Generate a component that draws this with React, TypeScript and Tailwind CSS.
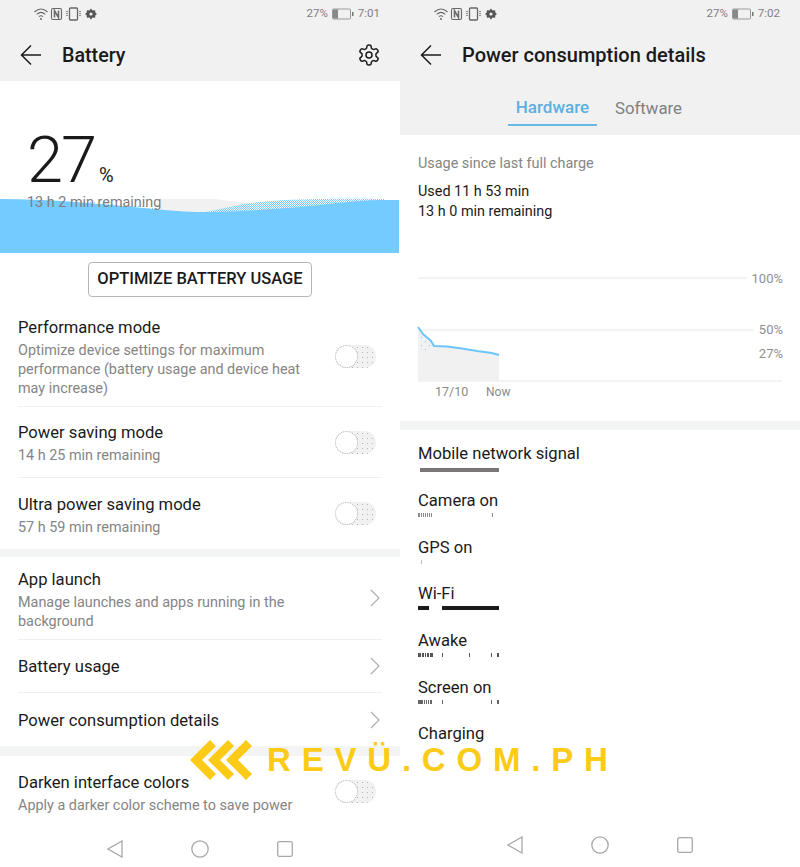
const font = { fontFamily: "Roboto, 'Liberation Sans', sans-serif" };

function StatusBar({ time }: { time: string }) {
  return (
    <div className="h-[28px] flex items-center justify-between pl-[34px] pr-[20px] text-[#7f7f7f]">
      <svg width="64" height="14" viewBox="0 0 64 14" fill="none" stroke="#666" strokeWidth="1.1">
        <path d="M0.5 5 Q7 -1 13.5 5" />
        <path d="M2.8 7.4 Q7 3.4 11.2 7.4" />
        <path d="M5 9.6 Q7 7.8 9 9.6" />
        <circle cx="7" cy="12" r="1" fill="#666" stroke="none" />
        <rect x="17.5" y="1.5" width="10" height="11" rx="1.5" />
        <path d="M20.5 10.5V3.8L24.5 10.5V3.5" strokeWidth="1.5" />
        <rect x="35.5" y="1" width="8" height="12" rx="1" strokeWidth="1.3" />
        <path d="M33 4v6M46 4v6" strokeDasharray="1 1" strokeWidth="1.4" />
        <path d="M57 1.6l1.6 1.9 2.5-.2.3 2.5 1.6 1.2-1.6 1.2-.3 2.5-2.5-.2L57 12.400l-1.600-1.900-2.500.2-.3-2.500L51 7l1.600-1.200.3-2.500 2.500.2z" fill="#555" stroke="none" />
        <circle cx="57" cy="7" r="1.600" fill="#f1f1f1" stroke="none" />
      </svg>
      <div className="flex items-center gap-[4px] text-[11.500px] leading-none">
        <span>27%</span>
        <svg width="22" height="12" viewBox="0 0 22 12" fill="none">
          <rect x="0.500" y="1" width="18" height="10" rx="1" stroke="#999" />
          <rect x="1" y="1.500" width="5" height="9" fill="#888" />
          <rect x="20" y="4" width="1.500" height="4" fill="#777" />
        </svg>
        <span>{time}</span>
      </div>
    </div>
  );
}

function BackArrow() {
  return (
    <svg width="22" height="22" viewBox="0 0 22 22" fill="none" stroke="#1c1c1c" strokeWidth="1.500" className="shrink-0">
      <path d="M21 11H2M11 1.500 1.500 11 11 20.500" />
    </svg>
  );
}

function Gear() {
  return (
    <svg width="24" height="24" viewBox="0 0 24 24" fill="none" stroke="#1c1c1c" strokeWidth="1.500" strokeLinejoin="round" className="ml-auto shrink-0">
      <path d="M12.22 2h-.44a2 2 0 0 0-2 2v.18a2 2 0 0 1-1 1.73l-.43.25a2 2 0 0 1-2 0l-.15-.08a2 2 0 0 0-2.73.73l-.22.38a2 2 0 0 0 .73 2.73l.15.1a2 2 0 0 1 1 1.72v.51a2 2 0 0 1-1 1.740l-.15.09a2 2 0 0 0-.73 2.730l.22.38a2 2 0 0 0 2.730.730l.15-.08a2 2 0 0 1 2 0l.43.25a2 2 0 0 1 1 1.730V20a2 2 0 0 0 2 2h.44a2 2 0 0 0 2-2v-.18a2 2 0 0 1 1-1.730l.43-.25a2 2 0 0 1 2 0l.15.08a2 2 0 0 0 2.730-.730l.22-.39a2 2 0 0 0-.730-2.730l-.15-.08a2 2 0 0 1-1-1.740v-.5a2 2 0 0 1 1-1.740l.15-.09a2 2 0 0 0 .730-2.730l-.22-.38a2 2 0 0 0-2.730-.730l-.15.08a2 2 0 0 1-2 0l-.43-.25a2 2 0 0 1-1-1.730V4a2 2 0 0 0-2-2z" />
      <circle cx="12" cy="12" r="3" />
    </svg>
  );
}

function Toggle() {
  return (
    <div className="relative w-[41px] h-[23px] rounded-full shrink-0 bg-[#f1f1f1] bg-[radial-gradient(#b5b5b5_0.8px,transparent_1px)] bg-[length:5px_5px]">
      <div className="absolute left-0 top-0 w-[23px] h-[23px] rounded-full bg-white border-[1.500px] border-dotted border-[#b0b0b0]" />
    </div>
  );
}

function Chevron() {
  return (
    <svg width="10" height="18" viewBox="0 0 10 18" fill="none" stroke="#ababab" strokeWidth="1.100" className="mr-[2px] shrink-0">
      <path d="M1 1l8 8-8 8" />
    </svg>
  );
}

function Row({
  title,
  lines = [],
  right,
  h,
  divider = true,
}: {
  title: string;
  lines?: string[];
  right?: "toggle" | "chevron";
  h: string;
  divider?: boolean;
}) {
  return (
    <div className={`mx-[18px] w-[364px] flex items-center justify-between ${h} ${divider ? "border-b border-[#efefef]" : ""}`}>
      <div className="w-[310px] pt-[2px]">
        <div className="text-[16.600px] leading-[24px] text-[#1a1a1a]">{title}</div>
        {lines.length > 0 && (
          <div className="mt-[1px]">
            {lines.map((l) => (
              <div key={l} className="text-[14.400px] leading-[19px] text-[#858585]">
                {l}
              </div>
            ))}
          </div>
        )}
      </div>
      {right === "toggle" && (
        <div className="pr-[6px]">
          <Toggle />
        </div>
      )}
      {right === "chevron" && <Chevron />}
    </div>
  );
}

function Band({ h }: { h: string }) {
  return <div className={`${h} bg-[#f3f4f4]`} />;
}

function NavBar() {
  return (
    <div className="mt-auto h-[44px] shrink-0 flex items-center justify-center gap-[68px]">
      <svg width="16" height="18" viewBox="0 0 16 18" fill="none" stroke="#a8a8a8" strokeWidth="1.300">
        <path d="M15 1v16L1 9z" />
      </svg>
      <svg width="18" height="18" viewBox="0 0 18 18" fill="none" stroke="#a8a8a8" strokeWidth="1.300">
        <circle cx="9" cy="9" r="8.200" />
      </svg>
      <svg width="16" height="16" viewBox="0 0 16 16" fill="none" stroke="#a8a8a8" strokeWidth="1.300">
        <rect x="0.700" y="0.700" width="14.600" height="14.600" rx="1.500" />
      </svg>
    </div>
  );
}

function Wave() {
  return (
    <svg className="absolute left-0 top-[115px]" width="400" height="57" viewBox="0 0 400 57">
      <defs>
        <pattern id="dots" width="2" height="2" patternUnits="userSpaceOnUse">
          <rect width="1" height="1" fill="#74cbff" />
          <rect x="1" y="1" width="1" height="1" fill="#74cbff" />
        </pattern>
        <pattern id="dots2" width="4" height="4" patternUnits="userSpaceOnUse">
          <rect width="1" height="1" fill="#74cbff" />
          <rect x="2" y="2" width="1" height="1" fill="#74cbff" />
        </pattern>
      </defs>
      <path d="M160 3 L215 3 C225 4 238 6 250 7 L250 18 L160 18 Z" fill="#f1f1f1" />
      <path d="M205 16 C225 12 240 8 260 6 C280 4 300 3 325 3 C350 2.500 370 3 385 3 L385 14 L205 18 Z" fill="url(#dots)" />
      <path d="M90 6 C110 7 130 9 160 12 L160 15 L90 10 Z" fill="url(#dots2)" />
      <path d="M0 3 C50 3 90 7 130 10.700 C160 13.700 185 16 205 16 C230 16 262 14 300 11 C330 8 360 4 380 4 L399 4 L399 57 L0 57 Z" fill="#74cbff" />
    </svg>
  );
}

type Seg = [number, number];

function Bars({ segs, color, y = 1 }: { segs: Seg[]; color: string; y?: number }) {
  return (
    <svg width="84" height="6" viewBox="0 0 84 6" className="block">
      {segs.map(([x, w]) => (
        <rect key={x} x={x} y={y} width={w} height="4" fill={color} />
      ))}
    </svg>
  );
}

function Metric({ title, segs, color }: { title: string; segs: Seg[]; color: string }) {
  return (
    <div className="h-[46.670px]">
      <div className="text-[16.600px] leading-[24px] text-[#1a1a1a]">{title}</div>
      <div className="mt-[-1px]">
        <Bars segs={segs} color={color} />
      </div>
    </div>
  );
}

function ChartRow({ label, line = true, dy = "" }: { label: string; line?: boolean; dy?: string }) {
  return (
    <div className="h-[16px] flex items-center justify-end gap-[5px]">
      {line && <div className="flex-1 h-[2px] bg-[#f4f4f4]" />}
      <span className={`text-[13px] leading-[16px] text-[#8f8f8f] mr-[-1px] ${dy}`}>{label}</span>
    </div>
  );
}

function Left() {
  return (
    <div className="w-[400px] h-[867px] flex flex-col bg-white overflow-hidden">
      <div className="h-[81px] bg-[#f1f1f1] shrink-0">
        <StatusBar time="7:01" />
        <div className="flex items-center h-[53px] pl-[20px] pr-[19px]">
          <BackArrow />
          <span className="ml-[20px] mt-[2px] text-[19.700px] font-medium text-[#1a1a1a] leading-none">Battery</span>
          <Gear />
        </div>
      </div>

      <div className="relative h-[172px] shrink-0 pl-[27px]">
        <Wave />
        <div className="relative pt-[42px] flex items-baseline">
          <span className="text-[65px] leading-[74px] font-light text-[#1a1a1a] tracking-[-2px]">27</span>
          <span className="ml-[4px] text-[20px] leading-none text-[#1a1a1a]">%</span>
        </div>
        <div className="relative mt-[-4px] text-[14.400px] leading-[20px] text-[#7d7d7d]">13 h 2 min remaining</div>
      </div>

      <div className="mt-[9px] shrink-0 self-center w-[224px] h-[35px] rounded-[4px] border border-[#b5b5b5] flex items-center justify-center text-[16.500px] font-medium text-[#1a1a1a]">
        OPTIMIZE BATTERY USAGE
      </div>

      <div className="mt-[9px] shrink-0">
        <Row
          h="h-[101px]"
          title="Performance mode"
          lines={["Optimize device settings for maximum", "performance (battery usage and device heat", "may increase)"]}
          right="toggle"
        />
        <Row h="h-[71px]" title="Power saving mode" lines={["14 h 25 min remaining"]} right="toggle" />
        <Row h="h-[71px]" title="Ultra power saving mode" lines={["57 h 59 min remaining"]} right="toggle" divider={false} />
        <Band h="h-[8px]" />
        <Row
          h="h-[83px]"
          title="App launch"
          lines={["Manage launches and apps running in the", "background"]}
          right="chevron"
        />
        <Row h="h-[53px]" title="Battery usage" right="chevron" />
        <Row h="h-[53px]" title="Power consumption details" right="chevron" divider={false} />
        <Band h="h-[10px]" />
        <Row
          h="h-[71px]"
          title="Darken interface colors"
          lines={["Apply a darker color scheme to save power"]}
          right="toggle"
          divider={false}
        />
      </div>
      <NavBar />
    </div>
  );
}

function Right() {
  return (
    <div className="w-[400px] h-[867px] flex flex-col bg-white overflow-hidden">
      <div className="h-[135px] bg-[#f1f1f1] shrink-0">
        <StatusBar time="7:02" />
        <div className="flex items-center h-[53px] pl-[20px]">
          <BackArrow />
          <span className="ml-[20px] text-[20px] font-medium text-[#1a1a1a] leading-none">Power consumption details</span>
        </div>
        <div className="flex justify-center gap-[18px] h-[54px] pr-[10px]">
          <div className="w-[89px] h-[45px] flex items-center justify-center border-b-2 border-[#6ab8e6] text-[17px] font-medium text-[#5cafe0] pt-[11px]">
            Hardware
          </div>
          <div className="h-[45px] flex items-center text-[16.800px] text-[#808080] pt-[10px]">Software</div>
        </div>
      </div>

      <div className="px-[18px] pt-[19px] shrink-0">
        <div className="text-[14.400px] leading-[20px] text-[#858585]">Usage since last full charge</div>
        <div className="mt-[8px] text-[14.400px] leading-[20px] text-[#1a1a1a]">Used 11 h 53 min</div>
        <div className="text-[14.400px] leading-[20px] text-[#1a1a1a]">13 h 0 min remaining</div>

        <div className="relative mt-[48px]">
          <ChartRow label="100%" dy="mt-[2px]" />
          <div className="h-[36px]" />
          <ChartRow label="50%" />
          <div className="h-[8px]" />
          <ChartRow label="27%" line={false} />
          <div className="mt-[18px] h-[2px] bg-[#f4f4f4]" />
          <div className="relative h-[20px] text-[#8a8a8a]">
            <span className="absolute left-[17px] top-[1px] text-[12.500px] leading-[18px]">17/10</span>
            <span className="absolute left-[68px] top-[1px] text-[12px] leading-[18px]">Now</span>
          </div>
          <svg className="absolute left-[-1px] top-[55px]" width="84" height="58" viewBox="0 0 84 58">
            <defs>
              <pattern id="cdots" width="8" height="8" patternUnits="userSpaceOnUse">
                <rect width="1" height="1" fill="#74cbff" />
                <rect x="4" y="4" width="1" height="1" fill="#74cbff" />
              </pattern>
            </defs>
            <path d="M1 2 L6 9 L14 16 L17 21 L30 21.500 L45 23.500 L60 26 L75 28 L82 30 L82 56 L1 56 Z" fill="#f1f1f1" />
            <path d="M1 2 L6 9 L14 16 L17 21 L6 28 L1 28 Z" fill="url(#cdots)" />
            <path d="M1 2 L6 9 L14 16 L17 21 L30 21.500 L45 23.500 L60 26 L75 28 L82 30" fill="none" stroke="#6cc6fb" strokeWidth="2" />
          </svg>
        </div>
      </div>

      <div className="mt-[19px] h-[9px] shrink-0 bg-[#f3f4f4]" />

      <div className="px-[18px] pt-[12px] shrink-0">
        <div className="h-[47px]">
          <div className="text-[16.600px] leading-[24px] text-[#1a1a1a]">Mobile network signal</div>
          <div className="ml-[2px] mt-[2px] w-[79px] h-[4px] bg-[#7a7678]" />
        </div>
        <Metric
          title="Camera on"
          color="#8c8c8c"
          segs={[[0, 2], [3, 1], [5, 1], [7, 1], [9, 1], [11, 1], [13, 1], [74, 1]]}
        />
        <Metric title="GPS on" color="#bcbcbc" segs={[[3, 1]]} />
        <Metric title="Wi-Fi" color="#1a1a1a" segs={[[0, 11], [24, 57]]} />
        <Metric
          title="Awake"
          color="#555555"
          segs={[[0, 3], [4, 2], [7, 1], [9, 2], [12, 3], [24, 1], [51, 1], [73, 1], [79, 2]]}
        />
        <Metric
          title="Screen on"
          color="#666666"
          segs={[[0, 5], [6, 1], [8, 1], [10, 1], [12, 2], [24, 1], [73, 1], [79, 2]]}
        />
        <div className="text-[16.600px] leading-[24px] text-[#1a1a1a]">Charging</div>
      </div>
      <NavBar />
    </div>
  );
}

export default function App() {
  return (
    <div className="relative w-[800px] h-[867px] flex bg-white overflow-hidden" style={font}>
      <Left />
      <Right />
      <div className="absolute left-[190px] top-[738px] flex items-center">
        <svg width="64" height="44" viewBox="0 0 64 44" fill="none" stroke="#fccb17" strokeWidth="8.500" className="shrink-0">
          <path d="M23 5 6 22l17 17" />
          <path d="M41 5 24 22l17 17" />
          <path d="M59 5 42 22l17 17" />
        </svg>
        <span
          className="ml-[13px] text-[33px] leading-[44px] font-bold text-[#fccb17] tracking-[10.800px] whitespace-nowrap"
          style={{ fontFamily: "'Liberation Sans', sans-serif" }}
        >
          REVÜ.COM.PH
        </span>
      </div>
    </div>
  );
}
